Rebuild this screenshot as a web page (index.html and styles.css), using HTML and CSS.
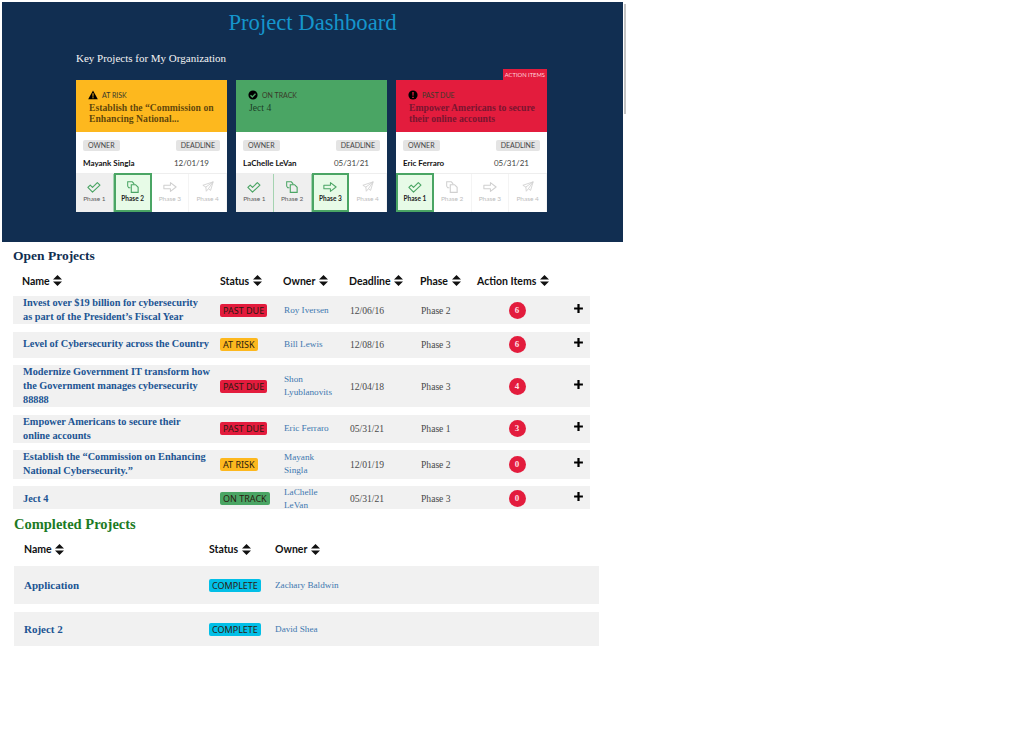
FILE: index.html
```html
<!DOCTYPE html>
<html lang="en">
<head>
    <meta charset="UTF-8">
    <meta name="viewport" content="width=device-width, initial-scale=1.0">
    <title>Project Dashboard</title>
    <link rel="stylesheet" href="styles.css">
</head>
<body>
    <!-- Shared icons -->
    <svg class="icon-defs" aria-hidden="true">
        <symbol id="i-sort" viewBox="0 0 10 12"><path d="M5 0l5 5H0zM5 12L0 7h10z" fill="currentColor"/></symbol>
        <symbol id="i-plus" viewBox="0 0 10 10"><path d="M4 1h2v3h3v2H6v3H4V6H1V4h3z" fill="currentColor"/></symbol>
        <symbol id="i-warn" viewBox="0 0 12 12"><path d="M6 .6l5.8 10.6H.2z" fill="#000"/><path d="M5.300 4h1.400l-.2 4h-1zM5.300 8.700h1.400V10H5.300z" fill="#fdb81e"/></symbol>
        <symbol id="i-ok" viewBox="0 0 12 12"><circle cx="6" cy="6" r="5.500" fill="#000"/><path d="M3 6.200l2.200 2.200L9 4.500" fill="none" stroke="#4aa564" stroke-width="1.600"/></symbol>
        <symbol id="i-late" viewBox="0 0 12 12"><circle cx="6" cy="6" r="5.500" fill="#000"/><path d="M5.100 2.500h1.800l-.3 4.500H5.400zM5.100 8h1.800v1.600H5.100z" fill="#e31c3d"/></symbol>
        <symbol id="i-check" viewBox="0 0 16 12"><path d="M1 6.500l2.700-2.700 2.600 2.600 5.500-5.400 3 2.800-8.500 8z" fill="none" stroke="currentColor" stroke-width="1.300" stroke-linejoin="round"/></symbol>
        <symbol id="i-copy" viewBox="0 0 14 14"><path d="M4 8H2L.8 6V1h5.400L8 3v1" fill="none" stroke="currentColor" stroke-width="1.200"/><path d="M5 4.300h5l3 3v6H5z" fill="none" stroke="currentColor" stroke-width="1.300"/></symbol>
        <symbol id="i-arrow" viewBox="0 0 16 12"><path d="M1 4h7.500V1l6.500 5-6.500 5V8H1z" fill="none" stroke="currentColor" stroke-width="1.200" stroke-linejoin="round"/></symbol>
        <symbol id="i-plane" viewBox="0 0 14 14"><path d="M13 1L1 5l3.500 2L5 12l2.500-3 2.500 2zM13 1L4.500 7M13 1L7.500 9" fill="none" stroke="currentColor" stroke-width="1" stroke-linejoin="round"/></symbol>
    </svg>

    <div class="scroll-thumb"></div>

    <section class="hero">
        <h1>Project Dashboard</h1>
        <h2>Key Projects for My Organization</h2>
        <div class="cards">
            <article class="card card-risk">
                <div class="card-head">
                    <div class="card-status"><svg class="status-icon"><use href="#i-warn"/></svg>AT RISK</div>
                    <h3 class="strong">Establish the “Commission on Enhancing National...</h3>
                </div>
                <div class="card-meta">
                    <span class="chip">OWNER</span><span class="chip">DEADLINE</span>
                    <b>Mayank Singla</b><span class="date">12/01/19</span>
                </div>
                <div class="phases">
                    <div class="phase done"><svg><use href="#i-check"/></svg>Phase 1</div>
                    <div class="phase current"><svg><use href="#i-copy"/></svg>Phase 2</div>
                    <div class="phase"><svg><use href="#i-arrow"/></svg>Phase 3</div>
                    <div class="phase"><svg><use href="#i-plane"/></svg>Phase 4</div>
                </div>
            </article>
            <article class="card card-track">
                <div class="card-head">
                    <div class="card-status"><svg class="status-icon"><use href="#i-ok"/></svg>ON TRACK</div>
                    <h3>Ject 4</h3>
                </div>
                <div class="card-meta">
                    <span class="chip">OWNER</span><span class="chip">DEADLINE</span>
                    <b>LaChelle LeVan</b><span class="date">05/31/21</span>
                </div>
                <div class="phases">
                    <div class="phase done"><svg><use href="#i-check"/></svg>Phase 1</div>
                    <div class="phase done"><svg><use href="#i-copy"/></svg>Phase 2</div>
                    <div class="phase current"><svg><use href="#i-arrow"/></svg>Phase 3</div>
                    <div class="phase"><svg><use href="#i-plane"/></svg>Phase 4</div>
                </div>
            </article>
            <article class="card card-late">
                <span class="action-tag">ACTION ITEMS</span>
                <div class="card-head">
                    <div class="card-status"><svg class="status-icon"><use href="#i-late"/></svg>PAST DUE</div>
                    <h3 class="strong">Empower Americans to secure their online accounts</h3>
                </div>
                <div class="card-meta">
                    <span class="chip">OWNER</span><span class="chip">DEADLINE</span>
                    <b>Eric Ferraro</b><span class="date">05/31/21</span>
                </div>
                <div class="phases">
                    <div class="phase current"><svg><use href="#i-check"/></svg>Phase 1</div>
                    <div class="phase"><svg><use href="#i-copy"/></svg>Phase 2</div>
                    <div class="phase"><svg><use href="#i-arrow"/></svg>Phase 3</div>
                    <div class="phase"><svg><use href="#i-plane"/></svg>Phase 4</div>
                </div>
            </article>
        </div>
    </section>

    <!-- Open projects -->
    <section class="open">
        <h2 class="section-title">Open Projects</h2>
        <div class="row-head open-grid">
            <span>Name <svg class="sort"><use href="#i-sort"/></svg></span>
            <span>Status <svg class="sort"><use href="#i-sort"/></svg></span>
            <span>Owner <svg class="sort"><use href="#i-sort"/></svg></span>
            <span>Deadline <svg class="sort"><use href="#i-sort"/></svg></span>
            <span>Phase <svg class="sort"><use href="#i-sort"/></svg></span>
            <span>Action Items <svg class="sort"><use href="#i-sort"/></svg></span>
        </div>
        <div class="open-list">
            <div class="row open-grid">
                <a class="name">Invest over $19 billion for cybersecurity<br>as part of the President’s Fiscal Year</a>
                <span class="tag tag-late">PAST DUE</span>
                <a class="owner">Roy Iversen</a>
                <span class="cell">12/06/16</span>
                <span class="cell">Phase 2</span>
                <span class="count">6</span>
                <svg class="plus"><use href="#i-plus"/></svg>
            </div>
            <div class="row open-grid">
                <a class="name">Level of Cybersecurity across the Country</a>
                <span class="tag tag-risk">AT RISK</span>
                <a class="owner">Bill Lewis</a>
                <span class="cell">12/08/16</span>
                <span class="cell">Phase 3</span>
                <span class="count">6</span>
                <svg class="plus"><use href="#i-plus"/></svg>
            </div>
            <div class="row open-grid">
                <a class="name">Modernize Government IT transform how the Government manages cybersecurity 88888</a>
                <span class="tag tag-late">PAST DUE</span>
                <a class="owner">Shon Lyublanovits</a>
                <span class="cell">12/04/18</span>
                <span class="cell">Phase 3</span>
                <span class="count">4</span>
                <svg class="plus"><use href="#i-plus"/></svg>
            </div>
            <div class="row open-grid">
                <a class="name">Empower Americans to secure their<br>online accounts</a>
                <span class="tag tag-late">PAST DUE</span>
                <a class="owner">Eric Ferraro</a>
                <span class="cell">05/31/21</span>
                <span class="cell">Phase 1</span>
                <span class="count">3</span>
                <svg class="plus"><use href="#i-plus"/></svg>
            </div>
            <div class="row open-grid">
                <a class="name">Establish the “Commission on Enhancing National Cybersecurity.”</a>
                <span class="tag tag-risk">AT RISK</span>
                <a class="owner narrow">Mayank Singla</a>
                <span class="cell">12/01/19</span>
                <span class="cell">Phase 2</span>
                <span class="count">0</span>
                <svg class="plus"><use href="#i-plus"/></svg>
            </div>
            <div class="row open-grid">
                <a class="name">Ject 4</a>
                <span class="tag tag-track">ON TRACK</span>
                <a class="owner">LaChelle LeVan</a>
                <span class="cell">05/31/21</span>
                <span class="cell">Phase 3</span>
                <span class="count">0</span>
                <svg class="plus"><use href="#i-plus"/></svg>
            </div>
        </div>
    </section>

    <!-- Completed projects -->
    <section class="completed">
        <h2 class="section-title green">Completed Projects</h2>
        <div class="row-head done-grid">
            <span>Name <svg class="sort"><use href="#i-sort"/></svg></span>
            <span>Status <svg class="sort"><use href="#i-sort"/></svg></span>
            <span>Owner <svg class="sort"><use href="#i-sort"/></svg></span>
        </div>
        <div class="done-list">
            <div class="row done-grid tall">
                <a class="name big">Application</a>
                <span class="tag tag-done">COMPLETE</span>
                <a class="owner">Zachary Baldwin</a>
            </div>
            <div class="row done-grid short">
                <a class="name big">Roject 2</a>
                <span class="tag tag-done">COMPLETE</span>
                <a class="owner">David Shea</a>
            </div>
        </div>
    </section>
</body>
</html>
```

FILE: styles.css
```css
body {
    font-family: "Liberation Serif", serif;
    margin: 0;
    padding: 2px 0 0 0;
    background-color: #ffffff;
    color: #212121;
}

.icon-defs {
    display: none;
}

.scroll-thumb {
    position: absolute;
    left: 624px;
    top: 4px;
    width: 2px;
    height: 110px;
    background-color: #c4c4c4;
}

/* Hero */
.hero {
    width: 621px;
    height: 240px;
    margin-left: 2px;
    background-color: #112e51;
    box-sizing: border-box;
    padding-top: 7px;
}

.hero h1 {
    margin: 0;
    font-size: 22.700px;
    font-weight: normal;
    line-height: 28px;
    text-align: center;
    color: #1595cc;
}

.hero h2 {
    margin: 13px 0 0 74px;
    font-size: 11px;
    line-height: 16px;
    font-weight: normal;
    color: #f4f4f4;
}

.cards {
    display: flex;
    gap: 9px;
    margin: 14px 0 0 74px;
}

.card {
    position: relative;
    width: 151px;
    height: 132px;
    background-color: #ffffff;
    display: flex;
    flex-direction: column;
}

.card-head {
    height: 52px;
    box-sizing: border-box;
    padding: 9px 6px 0 13px;
}

.card-risk .card-head {
    background-color: #fdb81e;
}

.card-track .card-head {
    background-color: #4aa564;
}

.card-late .card-head {
    background-color: #e31c3d;
}

.card-status {
    display: flex;
    align-items: center;
    height: 11px;
    font-family: Lato, sans-serif;
    font-size: 7px;
    color: #3a3a2a;
}

.status-icon {
    width: 10px;
    height: 10px;
    margin: 0 4px 0 -1px;
}

.card-head h3 {
    margin: 3px 0 0 0;
    font-size: 9.700px;
    line-height: 10.500px;
    font-weight: normal;
    color: rgba(0, 0, 0, 0.65);
}

.card-head h3.strong {
    font-weight: bold;
}

.card-late .card-head h3 {
    color: #7a1530;
}

.action-tag {
    position: absolute;
    right: 0;
    top: -11px;
    height: 11px;
    padding: 0 2px;
    background-color: #e31c3d;
    color: #ffd5dc;
    font-family: Lato, sans-serif;
    font-size: 5.800px;
    line-height: 12px;
}

.card-meta {
    flex: 1;
    display: grid;
    grid-template-columns: 1fr auto;
    align-items: center;
    align-content: start;
    justify-items: start;
    row-gap: 7px;
    padding: 8px 7px 0 7px;
    font-family: Lato, sans-serif;
    font-size: 8px;
    box-sizing: border-box;
}

.card-meta b {
    font-size: 8px;
    color: #111111;
}

.chip {
    background-color: #e4e4e4;
    color: #444444;
    font-size: 7px;
    line-height: 11px;
    padding: 0 5px;
    border-radius: 2px;
}

.chip:nth-child(2) {
    justify-self: end;
}

.date {
    justify-self: end;
    padding-right: 11px;
    color: #444444;
}

.phases {
    display: flex;
    flex: none;
    height: 39px;
    border-top: 1px solid #eeeeee;
    box-sizing: border-box;
}

.phase {
    flex: none;
    width: 25%;
    box-sizing: border-box;
    display: flex;
    flex-direction: column;
    align-items: center;
    padding-top: 7px;
    gap: 2px;
    font-family: Lato, sans-serif;
    font-size: 6.500px;
    color: #bdbdbd;
    border-right: 1px solid #f4f4f4;
}

.phase svg {
    width: 14px;
    height: 12px;
    color: #d0d0d0;
}

.phase.done {
    background-color: #efefef;
    color: #5b5b5b;
    border-right: 1px solid #a5d3b1;
}

.phase.done svg,
.phase.current svg {
    color: #4aa564;
}

.phase.current {
    background-color: #e7fbe7;
    border: 2px solid #4aa564;
    margin-top: -1px;
    color: #222222;
    font-weight: bold;
    padding-top: 6px;
}

/* Tables */
.section-title {
    margin: 0;
    font-size: 13.500px;
    line-height: 18px;
    font-weight: bold;
    color: #112e51;
}

.section-title.green {
    color: #1c7a24;
    font-size: 14.500px;
}

.open {
    width: 577px;
    margin: 5px 0 0 13px;
}

.completed {
    width: 585px;
    margin: 6px 0 0 14px;
}

.row-head {
    font-family: Lato, sans-serif;
    font-size: 10.500px;
    font-weight: bold;
    color: #111111;
    height: 22px;
    align-items: center;
}

.sort {
    width: 9px;
    height: 11px;
    margin-left: 1px;
    vertical-align: -1.500px;
}

.open-grid {
    display: grid;
    grid-template-columns: 197px 64px 66px 71px 56px 80px 1fr;
    padding-left: 10px;
}

.done-grid {
    display: grid;
    grid-template-columns: 185px 66px 1fr;
    padding-left: 10px;
}

.open .row-head {
    padding-left: 9px;
    grid-template-columns: 198px 63px 66px 71px 57px 80px 1fr;
    margin-top: 6px;
    margin-bottom: 6px;
    height: 19px;
}

.completed .row-head {
    margin-top: 6px;
    margin-bottom: 7px;
    height: 20px;
}

.open-list {
    height: 213px;
    overflow: hidden;
    display: flex;
    flex-direction: column;
    gap: 7.200px;
}

.done-list {
    display: flex;
    flex-direction: column;
    gap: 8px;
}

.row {
    background-color: #f1f1f1;
    min-height: 26px;
    align-items: center;
    flex-shrink: 0;
}

.row.tall {
    height: 38px;
}

.row.short {
    height: 34px;
}

.name {
    font-size: 10.300px;
    line-height: 14.200px;
    font-weight: bold;
    color: #205493;
    padding-right: 2px;
}

.name.big {
    font-size: 11px;
}

.owner {
    font-size: 9.200px;
    line-height: 13px;
    color: #3e78b0;
    padding-right: 10px;
}

.owner.narrow {
    padding-right: 20px;
}

.cell {
    font-size: 9.600px;
    color: #494949;
}

.tag {
    justify-self: start;
    font-family: "Noto Sans", sans-serif;
    font-size: 9px;
    line-height: 13px;
    padding: 0 3px;
    border-radius: 2px;
    color: #2b1a10;
}

.tag-late {
    background-color: #e31c3d;
}

.tag-risk {
    background-color: #fdb81e;
}

.tag-track {
    background-color: #4aa564;
}

.tag-done {
    background-color: #02bfe7;
}

.count {
    justify-self: center;
    width: 17px;
    height: 17px;
    border-radius: 50%;
    background-color: #e31c3d;
    color: #ffdfe4;
    font-family: "Liberation Serif", serif;
    font-weight: bold;
    font-size: 9px;
    line-height: 17px;
    text-align: center;
}

.plus {
    justify-self: end;
    width: 11px;
    height: 11px;
    margin: -4px 6px 0 0;
    color: #000000;
}
```
